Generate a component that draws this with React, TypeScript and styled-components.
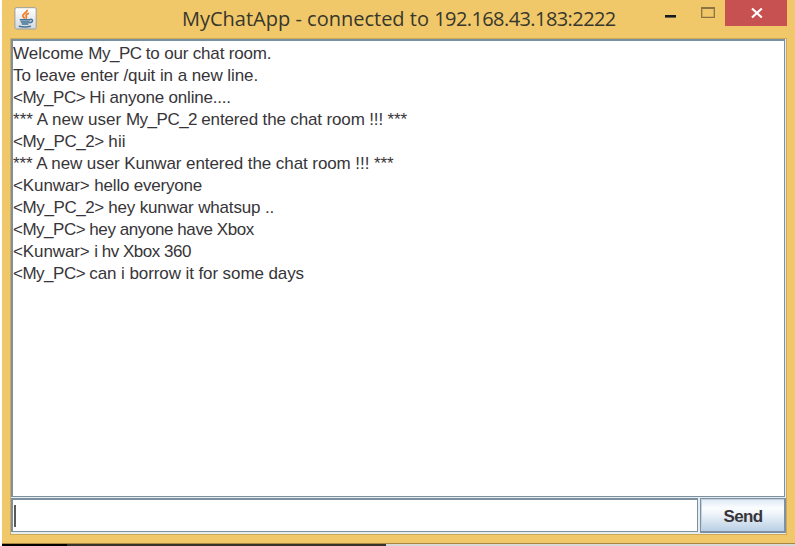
import React from "react";
import styled, { createGlobalStyle } from "styled-components";

const GlobalStyle = createGlobalStyle`
  * { box-sizing: border-box; }
  body { margin: 0; background: #fff; overflow: hidden; }
`;

const Desktop = styled.div`
  width: 795px;
  height: 546px;
  display: flex;
  flex-direction: column;
  padding-left: 2px;
  background: #fff;
`;

const Window = styled.main`
  height: 544px;
  display: flex;
  flex-direction: column;
  padding: 0 8px 8px;
  background: #f0c869;
  border-bottom: 1px solid #a98741;
`;

const TitleBar = styled.header`
  height: 38px;
  display: flex;
  align-items: flex-start;
`;

const AppIcon = styled.svg`
  width: 23px;
  height: 23px;
  margin: 7px 0 0 4px;
`;

const Title = styled.h1`
  width: 436px;
  margin: 5px 0 0 145px;
  color: #38372c;
  font: 400 20px/28px "Open Sans", "Noto Sans", sans-serif;
  white-space: pre;
`;

const Run = styled.span<{ $spacing: number }>`
  letter-spacing: ${(p) => p.$spacing}px;
`;

const Controls = styled.div`
  display: flex;
  margin-left: auto;
`;

const ControlButton = styled.button<{ $close?: boolean; $width: number }>`
  width: ${(p) => p.$width}px;
  height: 26px;
  padding: 0;
  border: 0;
  background: ${(p) => (p.$close ? "#c75050" : "transparent")};
  svg { display: block; }
`;

const Client = styled.section`
  flex: 1;
  display: flex;
  flex-direction: column;
  background: #e6edf1;
  border: 1px solid #cda958;
`;

const Log = styled.div`
  height: 458px;
  margin-right: 1px;
  background: #fff;
  border: solid #7d909f;
  border-width: 2px 1px 1px 2px;
  padding-top: 2px;
`;

const Message = styled.p`
  height: 22px;
  margin: 0;
  color: #373539;
  font: 400 17px/22px "Liberation Sans", Arial, sans-serif;
  white-space: pre;
`;

const Composer = styled.form`
  flex: 1;
  display: flex;
  gap: 2px;
  padding-top: 1px;
`;

const Entry = styled.div`
  width: 687px;
  height: 34px;
  padding: 5px 1px;
  background: #fff;
  border: solid #7d909f;
  border-width: 2px 1px 1px 2px;
`;

const Caret = styled.div`
  width: 2px;
  height: 22px;
  background: #5a5a5c;
`;

const SendButton = styled.button`
  width: 86px;
  height: 35px;
  padding: 3px 0 0 1px;
  border: solid #7d90a4;
  border-width: 1px 2px 2px 1px;
  box-shadow: inset 1px 1px #c5d3e0;
  background: linear-gradient(#dde8f3, #fbfdff 28%, #f0f5fa 45%, #b9cfe4);
  color: #373539;
  font: 700 17px/29px "Liberation Sans", Arial, sans-serif;
  letter-spacing: -0.7px;
`;

const Taskbar = styled.footer`
  height: 2px;
  display: flex;
  background: #d8d8d8;
`;

const TaskbarDark = styled.div<{ $width: number; $color: string }>`
  width: ${(p) => p.$width}px;
  background: ${(p) => p.$color};
`;

type TextRun = [text: string, spacing: number];

const titleRuns: TextRun[] = [
  ["MyChatApp - connected to ", 0],
  ["192.168.43.183:2222", -0.58],
];

const messages: TextRun[][] = [
  [["Welcome ", 0], ["My_PC ", -0.5], ["to our chat room.", -0.17]],
  [["To leave enter /quit in a new line.", -0.07]],
  [["<My_PC> ", -0.5], ["Hi anyone online....", -0.2]],
  [["*** A new user ", 0.03], ["My_PC_2 ", -0.5], ["entered the chat room !!! ***", -0.14]],
  [["<My_PC_2> ", -0.4], ["hii", 0.2]],
  [["*** A new user Kunwar entered the chat room !!! ***", -0.08]],
  [["<Kunwar> ", -0.1], ["hello everyone", -0.2]],
  [["<My_PC_2> ", -0.4], ["hey kunwar whatsup ..", -0.16]],
  [["<My_PC> ", -0.5], ["hey anyone have Xbox", -0.42]],
  [["<Kunwar> ", -0.1], ["i hv Xbox 360", -0.5]],
  [["<My_PC> ", -0.5], ["can i borrow it for some days", -0.09]],
];

const Runs = ({ runs }: { runs: TextRun[] }) => (
  <>
    {runs.map(([text, spacing]) => (
      <Run key={text} $spacing={spacing}>{text}</Run>
    ))}
  </>
);

const JavaIcon = () => (
  <AppIcon viewBox="0 0 23 23" aria-label="Java">
    <defs>
      <linearGradient id="tile" x2="0" y2="1">
        <stop stopColor="#fff" />
        <stop offset="1" stopColor="#d3d9e0" />
      </linearGradient>
    </defs>
    <rect x=".9" y=".7" width="21.3" height="21.3" rx="1.5" fill="url(#tile)" stroke="#9c9d9b" />
    <path d="M13 2.8c1 2.9-5 3.9-4.2 6.3.3 1 1.4 1.5 2 2.4M15 6.2c-2.7 1-3.7 2-2.7 3.4.6.9.2 1.4-.5 2" fill="none" stroke="#ef7d25" strokeWidth="1.7" />
    <path d="M6.2 12.2h10.3c0 2.8-1 4.6-2.5 5H8.7c-1.5-.4-2.5-2.2-2.5-5z" fill="#bccbd7" />
    <path d="M5.8 12.7h10.6M6.8 15h8.8M7.8 17h6.6M4.8 19.3c3.8 1 8.3 1 12.2 0" fill="none" stroke="#467596" strokeWidth="1.5" />
    <path d="M16 12.4c3.6-.8 3.5 3-.7 3.5" fill="none" stroke="#467596" strokeWidth="1.4" />
  </AppIcon>
);

export default function App() {
  return (
    <>
      <GlobalStyle />
      <Desktop>
        <Window>
          <TitleBar>
            <JavaIcon />
            <Title><Runs runs={titleRuns} /></Title>
            <Controls>
              <ControlButton $width={37} aria-label="Minimize">
                <svg width="37" height="26"><path d="M1 16.3h11" stroke="#151a22" strokeWidth="2.6" /></svg>
              </ControlButton>
              <ControlButton $width={24} aria-label="Maximize">
                <svg width="24" height="26"><path d="M.7 8h12.6v9.3H.7z" fill="none" stroke="#8b7442" strokeWidth="1.3" /><path d="M0 8h14" stroke="#8b7442" strokeWidth="2" /></svg>
              </ControlButton>
              <ControlButton $width={62} $close aria-label="Close">
                <svg width="62" height="26"><path d="M27 8.5l9.8 9M36.8 8.5l-9.8 9" stroke="#fff" strokeWidth="2.2" /></svg>
              </ControlButton>
            </Controls>
          </TitleBar>
          <Client>
            <Log>
              {messages.map((runs, i) => (
                <Message key={i}><Runs runs={runs} /></Message>
              ))}
            </Log>
            <Composer>
              <Entry><Caret /></Entry>
              <SendButton type="button">Send</SendButton>
            </Composer>
          </Client>
        </Window>
        <Taskbar>
          <TaskbarDark $width={65} $color="#000" />
          <TaskbarDark $width={319} $color="#38332a" />
        </Taskbar>
      </Desktop>
    </>
  );
}
